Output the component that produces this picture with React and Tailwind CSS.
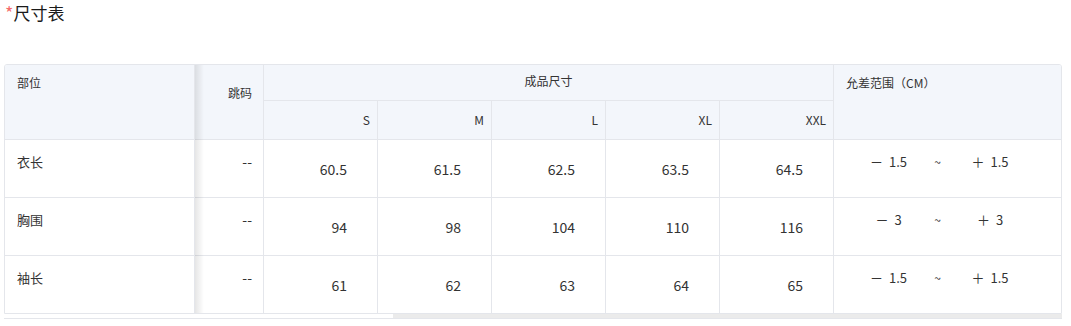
import React from 'react';

const sizes = ['S', 'M', 'L', 'XL', 'XXL'];

const rows = [
    { name: '衣长', code: '--', values: ['60.5', '61.5', '62.5', '63.5', '64.5'], tol: '1.5' },
    { name: '胸围', code: '--', values: ['94', '98', '104', '110', '116'], tol: '3' },
    { name: '袖长', code: '--', values: ['61', '62', '63', '64', '65'], tol: '1.5' },
];

const font = { fontFamily: '"Noto Sans CJK SC", "Noto Sans", sans-serif' };

const App = () => {
    return (
        <div className="bg-white w-[1071px] h-[326px] px-[4px] text-[#333]" style={font}>
            {/* 标题 */}
            <div className="text-[17px] leading-[26px] text-[#1a1a1a] flex items-start">
                <span className="text-[#f56c6c] text-[18px] leading-[24px] ml-px">*</span>
                <span>尺寸表</span>
            </div>

            <div className="mt-[38px] w-[1058px]">
                <div className="relative border border-[#e4e6eb] rounded-t-[3px] overflow-hidden">
                    <table className="table-fixed border-separate border-spacing-0 w-[1056px]">
                        <colgroup>
                            <col className="w-[190px]" />
                            <col className="w-[69px]" />
                            {sizes.map((s) => (
                                <col key={s} className="w-[114px]" />
                            ))}
                            <col className="w-[227px]" />
                        </colgroup>
                        <thead className="bg-[#f3f6fb] text-[12px] leading-[18px]">
                            <tr>
                                <th rowSpan={2} className="font-normal text-left align-top pt-[9px] pl-[12px] border-r border-b border-[#e4e6eb]">部位</th>
                                <th rowSpan={2} className="font-normal text-right align-top pt-[19px] pr-[11px] border-r border-b border-[#e4e6eb]">跳码</th>
                                <th colSpan={5} className="h-[36px] font-normal text-center align-top pt-[7px] border-r border-b border-[#e4e6eb]">成品尺寸</th>
                                <th rowSpan={2} className="font-normal text-left align-top pt-[9px] pl-[12px] border-b border-[#e4e6eb]">允差范围（CM）</th>
                            </tr>
                            <tr>
                                {sizes.map((s) => (
                                    <th key={s} className="h-[39px] font-normal text-right align-middle pr-[7px] border-r border-b border-[#e4e6eb]">{s}</th>
                                ))}
                            </tr>
                        </thead>
                        <tbody>
                            {rows.map((r, i) => {
                                const last = i === rows.length - 1;
                                const bb = last ? '' : 'border-b';
                                return (
                                    <tr key={r.name} className={last ? 'h-[57px]' : 'h-[58px]'}>
                                        <td className={`align-top pt-[13px] pl-[12px] text-[13px] leading-[18px] border-r border-[#e4e6eb] ${bb}`}>{r.name}</td>
                                        <td className={`align-top pt-[12px] pr-[11px] text-right text-[14px] leading-[18px] border-r border-[#e4e6eb] ${bb}`}>{r.code}</td>
                                        {r.values.map((v, j) => (
                                            <td key={j} className={`align-middle text-right pr-[30px] text-[14px] leading-[18px] border-r border-[#e4e6eb] ${bb}`}>{v}</td>
                                        ))}
                                        <td className={`align-top pt-[13px] text-[13px] leading-[18px] border-[#e4e6eb] ${bb}`}>
                                            <div className="flex pl-[28px]">
                                                <span className="w-[53px] flex justify-center gap-[6px]"><span>－</span><span>{r.tol}</span></span>
                                                <span className="w-[45px] text-center text-[12px]">~</span>
                                                <span className="w-[60px] flex justify-center gap-[6px]"><span>＋</span><span>{r.tol}</span></span>
                                            </div>
                                        </td>
                                    </tr>
                                );
                            })}
                        </tbody>
                    </table>
                    {/* 固定列阴影 */}
                    <div className="absolute top-0 bottom-0 left-[190px] w-[9px] bg-linear-to-r from-black/10 to-transparent pointer-events-none" />
                </div>

                {/* 横向滚动条 */}
                <div className="h-[5px] border-b border-[#e4e6eb]">
                    <div className="ml-[389px] h-full bg-[#ebebeb]" />
                </div>
            </div>
        </div>
    );
};

export default App;
